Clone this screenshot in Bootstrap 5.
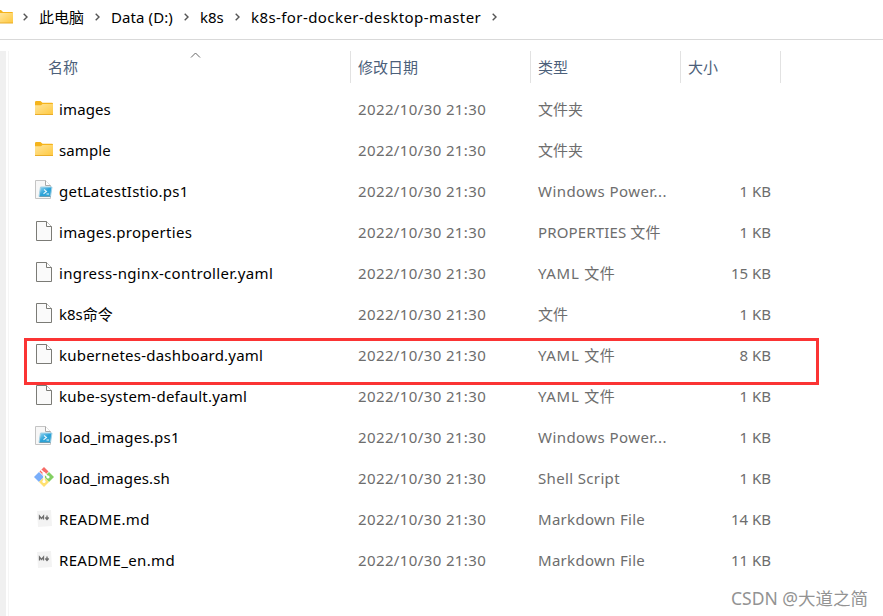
<!DOCTYPE html>
<html lang="zh-CN">
<head>
<meta charset="utf-8">
<title>k8s-for-docker-desktop-master</title>
<link href="https://cdn.jsdelivr.net/npm/bootstrap@5.3.0/dist/css/bootstrap.min.css" rel="stylesheet">
<style>
body{font-family:"Noto Sans","Noto Sans CJK SC",sans-serif;font-size:15px;line-height:20px;color:#000;background:#fff;width:883px;height:616px;white-space:nowrap}
.cjk{font-family:"Noto Sans CJK SC",sans-serif}
.path-bar{height:40px;border-bottom:1px solid #d9d9d9;padding-bottom:5px}
.path-bar span{margin-left:11px;margin-top:-1px}
.crumb-sep{width:5px;height:8px;fill:none;stroke:#555;stroke-width:1.4}
.crumb-pc{width:56px}.crumb-drive{width:73px;letter-spacing:.1px}.crumb-k8s{width:35px}.crumb-here{width:241px;letter-spacing:.42px}
.first-sep{margin-left:10px}
.rail{width:6px;background:#f0f0f0}
.rail-gap{width:3px;border-right:1px solid #f5f5f5}
.pane{height:565px;margin-top:11px}
.head-row{height:32px;color:#4c607a;margin-bottom:6px}
.head-cell{border-right:1px solid #e2e2e2;padding:6px 0 0 7px}
.head-cell.c-name{padding-left:39px}
.file-row{height:41px;color:#6d6d6d}
.file-row .file-name{color:#000;margin-top:-2px}
.c-name{width:342px}.c-date{width:180px}.c-type{width:150px}.c-size{width:100px}
.file-row .c-name{padding-left:25px}
.file-row .c-date,.file-row .c-type{padding-left:7px}
.file-row .c-size{padding-right:10px}
.file-row .c-date,.file-row .c-type,.file-row .c-size{padding-bottom:2px}
.glyph{width:20px;height:22px;margin-right:5px;margin-top:-3px}
.date-text{letter-spacing:.38px}
.marker{left:24px;top:338px;width:795px;height:47px;border:3px solid #fb3434}
.sort{left:190px;top:52px}
.credit{left:731px;top:588px;font-size:17.5px;color:#939393}
</style>
</head>
<body class="position-relative overflow-hidden">
<svg class="position-absolute" width="0" height="0">
<defs>
<linearGradient id="gold" x2="1" y2="1"><stop stop-color="#ffe59c"/><stop offset="1" stop-color="#ffc83d"/></linearGradient>
<linearGradient id="sky" x2="1" y2="1"><stop stop-color="#9bd9f4"/><stop offset=".5" stop-color="#2ba2d8"/><stop offset="1" stop-color="#38a6d3"/></linearGradient>
</defs>
<symbol id="folder" viewBox="0 0 20 22"><path d="M1 5.200q0-1.200 1.200-1.200H6.500l2 1.800H18q1 0 1 1v3H1z" fill="#f5b41c"/><path d="M1 8.200h6L8.500 7H19v11H1z" fill="url(#gold)"/><path d="M1 17.500h18" stroke="#e9ad2b"/></symbol>
<symbol id="sheet" viewBox="0 0 20 22"><path d="M2.500 1.500h10l5 5v14h-15z" fill="#fafafa" stroke="#7b7b76"/><path d="M12.500 1.500v5h5" fill="#fff" stroke="#7b7b76"/></symbol>
<symbol id="ps" viewBox="0 0 20 22"><path d="M1.500 1.500h10l5 5v13h-15z" fill="#f7f7f7" stroke="#c4c4c4"/><path d="M11.500 1.500v5h5" fill="#fff" stroke="#aaa"/><path d="M6.500 8h11.500l-1.500 9.500H5z" fill="url(#sky)" stroke="#a5d2e5"/><path d="M5.500 17.500h11" stroke="#6b9db2"/><path d="M10 10.500l2.500 2-3 2.200M12.500 15h2.500" fill="none" stroke="#e5f5fc" stroke-width="1.100"/></symbol>
<symbol id="git" viewBox="0 0 20 22"><path d="M10 1l4.500 4.500L10 10 5.500 5.500z" fill="#f66c67"/><path d="M5 6l5 5-5 5-5-5z" fill="#79aefa"/><path d="M15 6l5 5-5 5-5-5z" fill="#83cf62"/><path d="M10 11l5 5-5 5-5-5z" fill="#ffe070"/><path d="M7 4l3 3v9M10 7l4 4" stroke="#fff" stroke-width="1.500" fill="none"/><circle cx="10" cy="7.500" r="1.600" fill="#fff"/><circle cx="14" cy="11" r="1.600" fill="#fff"/><circle cx="10" cy="15.500" r="1.600" fill="#fff"/></symbol>
<symbol id="md" viewBox="0 0 20 22"><path d="M3 4l14-1 1 16-14 1z" fill="#f3f3f3"/><path d="M5.500 12.500V9l2 2.500 2-2.500v3.500M13 8.500v4M11.300 10.500l1.700 2 1.700-2" fill="none" stroke="#6e6e6e" stroke-width="1.300"/></symbol>
<symbol id="next" viewBox="0 0 5 8"><path d="M.7.8L4 4 .7 7.200"/></symbol>
</svg>

<nav class="path-bar d-flex align-items-center" aria-label="path">
<svg width="13" height="14" viewBox="0 0 13 14"><path d="M0 0h1l2 2h9q1 0 1 1v3H0z" fill="#f5b41c"/><path d="M0 3h13v10H0z" fill="url(#gold)"/><path d="M0 13h13" stroke="#e9ad2b"/></svg>
<svg class="crumb-sep first-sep"><use href="#next"/></svg>
<span class="cjk crumb-pc">此电脑</span>
<svg class="crumb-sep"><use href="#next"/></svg>
<span class="crumb-drive">Data (D:)</span>
<svg class="crumb-sep"><use href="#next"/></svg>
<span class="crumb-k8s">k8s</span>
<svg class="crumb-sep"><use href="#next"/></svg>
<span class="crumb-here">k8s-for-docker-desktop-master</span>
<svg class="crumb-sep"><use href="#next"/></svg>
</nav>

<main class="pane d-flex">
<div class="rail"></div><div class="rail-gap"></div>
<section>
<div class="head-row d-flex cjk">
<div class="head-cell c-name">名称</div><div class="head-cell c-date">修改日期</div><div class="head-cell c-type">类型</div><div class="head-cell c-size">大小</div>
</div>
<div id="files"></div>
</section>
</main>
<svg class="sort position-absolute" width="11" height="6" viewBox="0 0 11 6"><path d="M1 5.500l4.500-4.500L10 5.500" fill="none" stroke="#666"/></svg>
<div class="marker position-absolute"></div>
<div class="credit position-absolute">CSDN @大道之简</div>
<script>
// icon, name, type, size, name tracking, type tracking
const files=[
["folder","images","文件夹","",.12,0],
["folder","sample","文件夹","",.12,0],
["ps","getLatestIstio.ps1","Windows Power...","1 KB",.22,.44],
["sheet","images.properties","PROPERTIES 文件","1 KB",.29,.14],
["sheet","ingress-nginx-controller.yaml","YAML 文件","15 KB",.34,.72],
["sheet","k8s命令","文件","1 KB",0,0],
["sheet","kubernetes-dashboard.yaml","YAML 文件","8 KB",.22,.72],
["sheet","kube-system-default.yaml","YAML 文件","1 KB",.24,.72],
["ps","load_images.ps1","Windows Power...","1 KB",.22,.44],
["git","load_images.sh","Shell Script","1 KB",.15,.35],
["md","README.md","Markdown File","14 KB",.38,.3],
["md","README_en.md","Markdown File","11 KB",.35,.3]];
document.getElementById("files").innerHTML=files.map(([icon,name,type,size,nt,tt])=>`<div class="file-row d-flex align-items-center"><div class="c-name d-flex align-items-center"><svg class="glyph"><use href="#${icon}"/></svg><span class="file-name" style="letter-spacing:${nt}px">${name}</span></div><div class="c-date"><span class="date-text">2022/10/30 21:30</span></div><div class="c-type"><span style="letter-spacing:${tt}px">${type}</span></div><div class="c-size text-end"><span>${size}</span></div></div>`).join("");
</script>
<script src="https://cdn.jsdelivr.net/npm/bootstrap@5.3.0/dist/js/bootstrap.bundle.min.js"></script>
</body>
</html>
